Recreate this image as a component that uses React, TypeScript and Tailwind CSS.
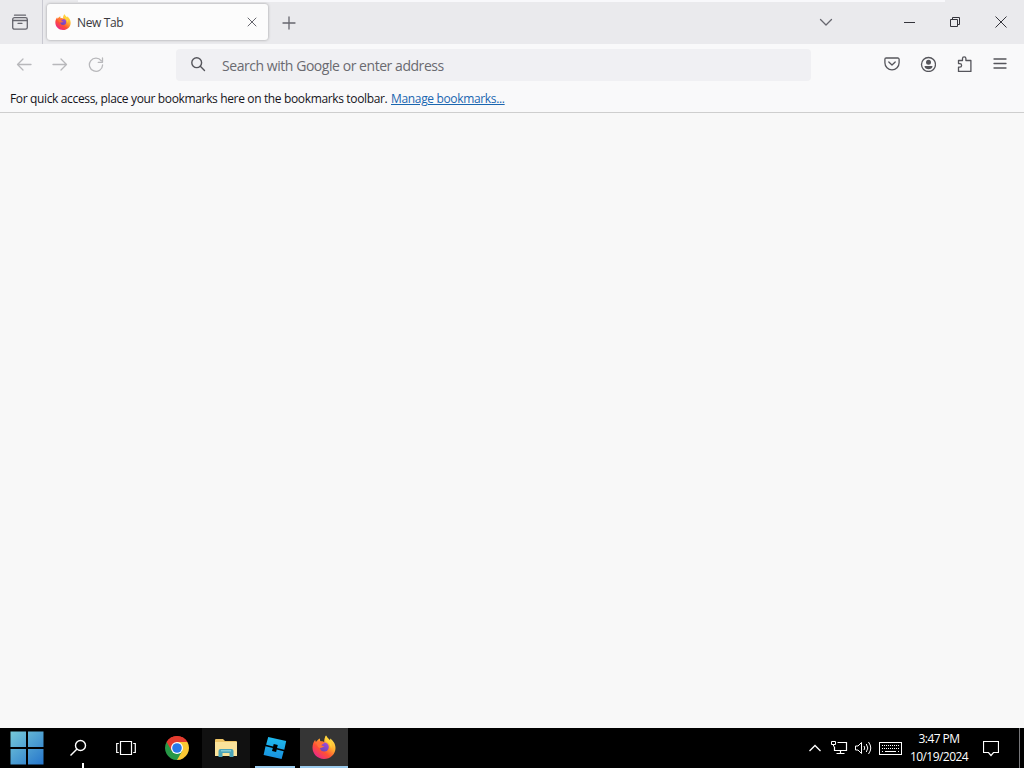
import type { ReactNode } from 'react'

type IconProps = { className?: string; children: ReactNode; size?: number }

function Icon({ className = '', children, size = 16 }: IconProps) {
  return (
    <svg
      width={size}
      height={size}
      viewBox={`0 0 ${size} ${size}`}
      fill="none"
      stroke="currentColor"
      strokeWidth="1.3"
      strokeLinecap="round"
      strokeLinejoin="round"
      className={`shrink-0 ${className}`}
    >
      {children}
    </svg>
  )
}

function FirefoxLogo({ size, id }: { size: number; id: string }) {
  return (
    <svg width={size} height={size} viewBox="0 0 24 24" className="shrink-0">
      <defs>
        <linearGradient id={`${id}-flame`} x1="0.85" y1="0.1" x2="0.2" y2="0.95">
          <stop offset="0" stopColor="#ffe54a" />
          <stop offset="0.35" stopColor="#ffa82e" />
          <stop offset="0.65" stopColor="#ff5034" />
          <stop offset="1" stopColor="#e9268c" />
        </linearGradient>
        <linearGradient id={`${id}-globe`} x1="0.8" y1="0" x2="0.3" y2="1">
          <stop offset="0" stopColor="#a04ade" />
          <stop offset="1" stopColor="#6b45b8" />
        </linearGradient>
      </defs>
      <path
        d="M14 0.5c1 2.4 2.7 3.2 4 5 .3-.8.2-1.4 0-2 3.300 2 5.500 5.700 5.500 9.500C23.500 19.200 18.400 24 12 24S.5 19 .5 12.800c0-3.300 1-5.800 2.700-8 .1 1 .3 1.700.8 2.200 1-1.600 2.300-2.800 4-3.500-.2 1.300.1 2.300.7 3.100 1.500-.3 2.600 0 3.600.6C12 4.800 12.600 2.500 14 .5z"
        fill={`url(#${id}-flame)`}
      />
      <circle cx="12.300" cy="12" r="4.500" fill={`url(#${id}-globe)`} />
      <path
        d="M4 7c2-1 3.500-.8 4.700-.4 1.800-.4 3.200.2 4 1-.4 1.500-2.900 1.400-3.300 2.800 1 .3 2.300.4 3.400 1.500-1.300-.2-2.300.5-3.300.9-1.700.4-3-.2-3.700-1.400z"
        fill="#ff7139"
      />
      <path d="M14 .5c1 2.400 2.700 3.200 4 5 1.900 2.500 2.200 5.500 1 8-.1-2.800-1.700-5.200-4-6.400-1.700-1.300-2.400-3.700-1-6.600z" fill="#ffd43b" />
    </svg>
  )
}

function TabStrip() {
  return (
    <div className="relative flex h-11 items-center bg-[#eaeaed] text-[#66666e]">
      <div className="absolute top-0 left-[78px] h-[2px] w-[867px] bg-[#f8f8fb]" />
      <div className="flex h-11 w-[43px] items-center border-r border-[#c9c9d1] pl-3">
        <Icon>
          <path d="M2.500 1.200h11" />
          <rect x="0.700" y="3.700" width="14.600" height="11.500" rx="1.800" />
          <path d="M.7 6.500h14.600M6 9.300h4" />
        </Icon>
      </div>
      <div className="ml-1 flex h-[36px] w-[221px] items-center rounded-[3px] bg-[#fcfcfc] pl-2 shadow-[0_0_3px_rgba(0,0,0,0.35)]">
        <FirefoxLogo size={16} id="tab" />
        <span className="mt-0.5 ml-1.5 w-[170px] shrink-0 text-[12px] tracking-[-0.35px] whitespace-nowrap text-[#3a3a40]">
          New Tab
        </span>
        <Icon size={10}>
          <path d="M1 1l8 8M9 1L1 9" strokeWidth="1" />
        </Icon>
      </div>
      <Icon className="mt-px ml-[14px]" size={14}>
        <path d="M7 1v12M1 7h12" />
      </Icon>
      <Icon className="ml-[523px]" size={14}>
        <path d="M1.500 4.500L7 10l5.500-5.500" />
      </Icon>
      <div className="ml-[71px] flex items-center text-[#34343b]">
        <div className="h-px w-[11px] bg-[#34343b]" />
        <svg width="12" height="12" viewBox="0 0 12 12" fill="none" stroke="currentColor" className="ml-[34px]">
          <path d="M1.500 3.500h7v7h-7zM3.500 3.500v-2h7v7h-2" />
        </svg>
        <svg width="12" height="12" viewBox="0 0 12 12" fill="none" stroke="currentColor" className="ml-[34px]">
          <path d="M.5.500l11 11M11.500.500l-11 11" />
        </svg>
      </div>
    </div>
  )
}

function NavBar() {
  return (
    <div className="flex h-10 items-center bg-[#f9f9fa] pt-0.5 pl-4">
      <div className="flex gap-5 text-[#b8b8bb]">
        <Icon>
          <path d="M15 7.500H1.500M7 2L1.500 7.500 7 13" />
        </Icon>
        <Icon>
          <path d="M1 7.500h13.500M9 2l5.500 5.500L9 13" />
        </Icon>
        <Icon>
          <path d="M13.300 3.800A6.600 6.600 0 1 0 14.600 8M14.500 1v4.300h-4.300" />
        </Icon>
      </div>
      <div className="ml-[72px] flex h-8 w-[635px] items-center rounded bg-[#f0f0f3] pl-3.5 text-[#55555b]">
        <Icon className="mb-0.5">
          <circle cx="6.700" cy="6.700" r="4.900" strokeWidth="1.400" />
          <path d="M10.300 10.300l4.200 4.200" strokeWidth="1.400" />
        </Icon>
        <span className="ml-4 text-[14px] tracking-[-0.45px] whitespace-nowrap text-[#6a6a70]">
          Search with Google or enter address
        </span>
      </div>
      <div className="mb-0.5 ml-[73px] flex gap-5 text-[#55555b]">
        <Icon>
          <path d="M2.200 2h11.600a1.300 1.300 0 0 1 1.300 1.300v3.500a7.100 7.100 0 0 1-14.200 0V3.300A1.300 1.300 0 0 1 2.200 2zM4.800 6L8 9l3.200-3" />
        </Icon>
        <Icon>
          <circle cx="8.500" cy="8.500" r="7" />
          <circle cx="8.500" cy="6.200" r="2.500" fill="currentColor" stroke="none" />
          <path d="M4.500 10h8c0 2.200-2 3.300-4 3.300s-4-1.100-4-3.300z" fill="currentColor" stroke="none" />
        </Icon>
        <Icon>
          <path d="M2.500 15.400v-4.200h1.300a1.800 1.800 0 0 0 0-3.600H2.500V4.500h4V2.500a1.700 1.700 0 0 1 3.400 0v2h5v10.900z" />
        </Icon>
        <Icon>
          <path d="M2 3h12M2 7.500h12M2 12h12" />
        </Icon>
      </div>
    </div>
  )
}

function BookmarksBar() {
  return (
    <div className="flex h-[29px] items-center border-b border-[#cecece] bg-[#f9f9fa] pt-0.5 pl-2.5 text-[12px] whitespace-nowrap text-[#15141a]">
      <span className="w-[381px] tracking-[-0.355px]">
        For quick access, place your bookmarks here on the bookmarks toolbar.
      </span>
      <a className="tracking-[-0.34px] text-[#1a66b0] underline">Manage bookmarks...</a>
    </div>
  )
}

function ChromeLogo() {
  return (
    <svg width="24" height="24" viewBox="0 0 24 24">
      <path d="M12 12L1.610 6A12 12 0 0 1 22.390 6z" fill="#e33b2e" />
      <path d="M12 12L22.390 6A12 12 0 0 1 12 24z" fill="#fcc934" />
      <path d="M12 12L12 24A12 12 0 0 1 1.610 6z" fill="#279847" />
      <path d="M12 6h10.390l-5.200 9z" fill="#fcc934" />
      <path d="M1.610 6L6.800 15h5.200V6z" fill="#279847" />
      <path d="M1.610 6L6.800 15 12 6h10.390A12 12 0 0 0 1.610 6z" fill="#e33b2e" />
      <path d="M17.200 15L12 24 6.800 15z" fill="#279847" />
      <circle cx="12" cy="12" r="6" fill="#fff" />
      <circle cx="12" cy="12" r="4.800" fill="#2878e8" />
    </svg>
  )
}

function ExplorerLogo() {
  return (
    <svg width="22" height="20" viewBox="0 0 22 20">
      <path d="M0 2a1 1 0 0 1 1-1h7l2 2h11a1 1 0 0 1 1 1v14H0z" fill="#efc566" />
      <path d="M0 4h22v14H0z" fill="#fbe39a" />
      <path d="M3.500 19v-6a2 2 0 0 1 2-2h11a2 2 0 0 1 2 2v6h-4v-4h-7v4z" fill="#4ba4b8" />
      <path d="M6 12h10v1.500H6z" fill="#83cbd3" />
    </svg>
  )
}

function StudioLogo() {
  return (
    <svg width="24" height="24" viewBox="0 0 24 24">
      <defs>
        <linearGradient id="studio" gradientUnits="userSpaceOnUse" x1="0" y1="0" x2="0" y2="24">
          <stop offset="0" stopColor="#1fbdee" />
          <stop offset="1" stopColor="#198fdf" />
        </linearGradient>
      </defs>
      <path d="M5.200 1L23.200 5l-1.900 8.700-7.300-1.700.8-3.100-4.100-1-.6 2.600-7-1.700z" fill="url(#studio)" />
      <path d="M2.500 10.300l7.300 1.700-.8 3.100 4.100 1 .6-2.600 7 1.700L18.600 23 .6 19z" fill="url(#studio)" />
    </svg>
  )
}

function Tray() {
  return (
    <div className="ml-auto flex h-10 items-center text-white">
      <svg width="12" height="8" viewBox="0 0 12 8" fill="none" stroke="currentColor" strokeWidth="1.300">
        <path d="M.5 7L6 1.500 11.500 7" />
      </svg>
      <svg width="17" height="14" viewBox="0 0 17 14" fill="none" stroke="currentColor" className="ml-[10px]">
        <path d="M6.500 1.500h9v8h-12v-4M9.500 9.500v3M5.500 12.500h8" strokeWidth="1.200" />
        <path d="M.5.500h4v3h-4zM2.500 3.500v2" />
      </svg>
      <svg width="17" height="14" viewBox="0 0 17 14" fill="none" stroke="currentColor" className="ml-[7px]">
        <path d="M.5 5h2.500L6.500 1.500v11L3 9H.5zM9 5q1.500 2 0 4M11.300 3q3 4 0 8M13.500 1q4.500 6 0 12" />
      </svg>
      <svg width="23" height="13" viewBox="0 0 23 13" fill="none" stroke="currentColor" className="ml-[7px]">
        <rect x="0.500" y="0.500" width="22" height="12" />
        <path d="M3 3.500h17M3 6.500h17" strokeDasharray="1 1" />
        <path d="M3 9.500h1M6 9.500h11M19 9.500h1" />
      </svg>
      <div className="ml-[7px] flex w-[60px] flex-col items-center text-[12px] leading-[18px] tracking-[-0.55px] whitespace-nowrap">
        <span>3:47 PM</span>
        <span>10/19/2024</span>
      </div>
      <svg width="16" height="17" viewBox="0 0 16 17" fill="none" stroke="currentColor" className="ml-[14px]">
        <path d="M.5 1.500h15v11h-5L8 15.500l-2.500-3h-5z" strokeWidth="1.200" />
      </svg>
      <div className="ml-5 h-10 w-px bg-[#77777a]" />
      <div className="w-[4px]" />
    </div>
  )
}

function Taskbar() {
  return (
    <div className="flex h-10 bg-black font-['Open_Sans',sans-serif] text-white">
      <div className="flex w-[52px] items-center pl-[10px]">
        <svg width="34" height="34" viewBox="0 0 34 34">
          <defs>
            <linearGradient id="start" gradientUnits="userSpaceOnUse" x1="0" y1="0" x2="30" y2="34">
              <stop offset="0" stopColor="#77cbd9" />
              <stop offset="1" stopColor="#2979cc" />
            </linearGradient>
          </defs>
          <path d="M.5.500h15.500V16H.5zM18 .5h15.500V16H18zM.5 18h15.500v15.500H.5zM18 18h15.500v15.500H18z" fill="url(#start)" />
        </svg>
      </div>
      <div className="relative flex w-[50px] items-center justify-center">
        <svg width="18" height="18" viewBox="0 0 18 18" fill="none" stroke="#fff" strokeWidth="1.400" className="ml-px">
          <circle cx="11.500" cy="6.500" r="5" />
          <path d="M8 10L1.500 16.500" />
        </svg>
        <div className="absolute bottom-0 left-[30px] h-[5px] w-[2px] bg-white" />
      </div>
      <div className="flex w-12 items-center justify-center">
        <svg width="20" height="16" viewBox="0 0 20 16" fill="none" stroke="#fff" strokeWidth="1.200">
          <path d="M4.500 1.500h11v13h-11zM2.800 3.500H.7v9h2.100M17.200 3.500h2.100v9h-2.100" />
        </svg>
      </div>
      <div className="flex w-[52px] items-center justify-center pl-px">
        <ChromeLogo />
      </div>
      <div className="flex w-12 items-center justify-center bg-[#111]">
        <ExplorerLogo />
      </div>
      <div className="flex w-[50px] flex-col items-center">
        <div className="flex h-[38px] items-center pt-[2px]">
          <StudioLogo />
        </div>
        <div className="h-[2px] w-10 bg-[#9bcbed]" />
      </div>
      <div className="flex w-12 flex-col items-center bg-[#353535]">
        <div className="flex h-[38px] items-center">
          <FirefoxLogo size={24} id="task" />
        </div>
        <div className="h-[2px] w-12 bg-[#9bcbed]" />
      </div>
      <Tray />
    </div>
  )
}

export default function App() {
  return (
    <div className="flex h-[768px] w-[1024px] flex-col overflow-hidden bg-[#f9f9fa] font-['Open_Sans',sans-serif]">
      <TabStrip />
      <NavBar />
      <BookmarksBar />
      <main className="flex-1 bg-[#f8f8f8]" />
      <Taskbar />
    </div>
  )
}
